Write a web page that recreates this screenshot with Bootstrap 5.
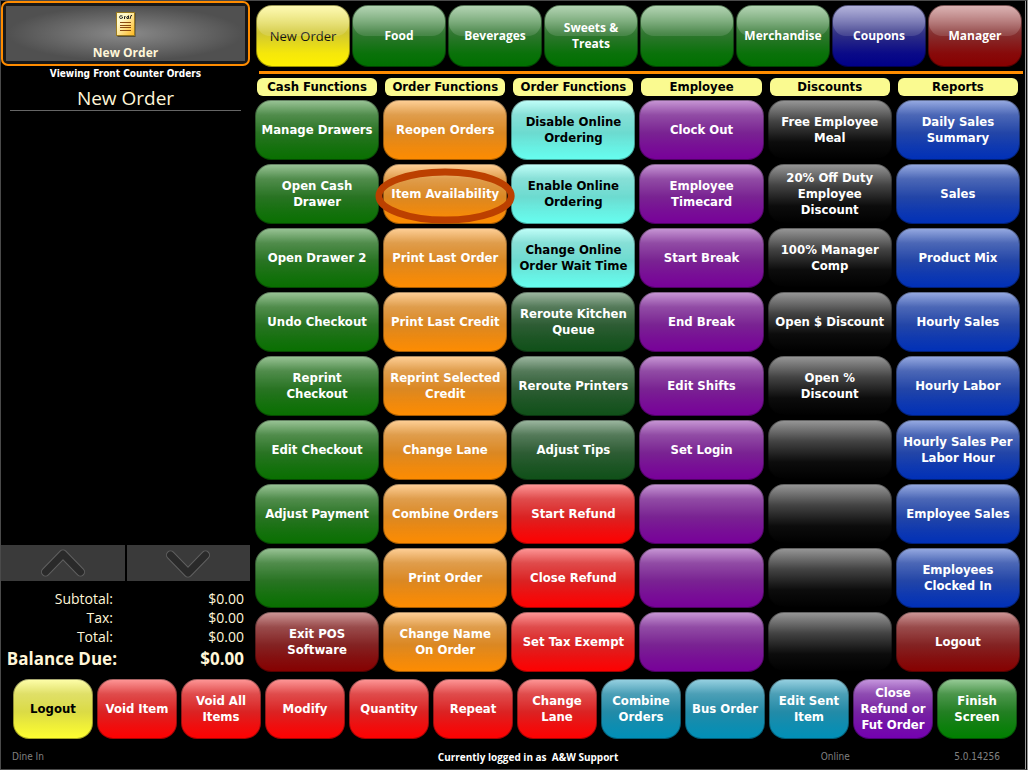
<!DOCTYPE html>
<html lang="en">
<head>
<meta charset="utf-8">
<meta name="viewport" content="width=device-width, initial-scale=1">
<title>Manager Screen</title>
<link href="https://cdn.jsdelivr.net/npm/bootstrap@5.3.0/dist/css/bootstrap.min.css" rel="stylesheet">
<style>
body{background:#000;color:#fff;font-family:"DejaVu Sans Condensed","DejaVu Sans",sans-serif;font-size:13px;line-height:16px}
.shell{min-height:100vh;border:1px solid #4a4a4a;border-right:3px double #999}
.sidebar{flex:0 0 249px;font-family:"Open Sans",sans-serif}
.main-area{padding:4px 2px 0 5px}
.cream{color:#fff6d8}
.order-tab{height:65px;border:2px solid #ff8c00;border-radius:7px;background:#181818;padding:3px}
.order-tab>span{height:100%;background:radial-gradient(ellipse at 50% 50%,#8a8a8a,#505050 70%);font-weight:700;font-size:12px;color:#fff6d8}
.viewing{font-family:"DejaVu Sans Condensed","DejaVu Sans",sans-serif;font-size:10px;font-weight:700}
.order-title{font-size:19px;line-height:24px;border-bottom:1px solid #666;margin:0 9px}
.scroll-key{height:36px;background:#3a3a3a;border:0;padding:0}
.totals{width:100%;font-size:14px;line-height:19px}
.totals th{font-weight:400;text-align:right;width:116px;padding:0 4px 0 0}
.totals td{text-align:right;padding:0 6px 0 0}
.totals .due th,.totals .due td{font-size:17px;line-height:26px;font-weight:700;white-space:nowrap}
.totals .due th{padding-right:0}
.key{--c:#087000;height:60px;border:1px solid rgba(0,0,0,.35);border-radius:16px;color:#fff;font-weight:700;padding:0 2px;
 background:linear-gradient(rgba(255,255,255,.6),rgba(180,180,180,.42) 25%,rgba(125,125,125,.28) 55%,rgba(120,120,120,.12) 78%,transparent) border-box,var(--c) border-box}
.c-orange{--c:#ff8c00}.c-cyan{--c:#66fff0;color:#000}.c-purple{--c:#78009a}
.c-blue{--c:#0030b8}.c-forest{--c:#0f5018}.c-red{--c:#f00}.c-maroon{--c:#860000}.c-lemon{--c:#ffff30;color:#000}
.c-teal{--c:#0090b8}.c-violet{--c:#7400b0}.c-lime{--c:#008000}
.c-black{background:linear-gradient(#999,#444 35%,#0c0c0c 70%,#000) border-box}
.tabs-grid{display:grid;grid-template-columns:repeat(8,1fr);gap:2px;margin:0 1px}
.tab-key{--c:#007000;position:relative;height:62px;border:1px solid rgba(0,0,0,.4);border-radius:16px;padding:0 2px;color:#fff;font:700 12px/16px "Open Sans",sans-serif;
 background:linear-gradient(rgba(255,255,255,.55),rgba(130,130,130,.38) 45%,rgba(130,130,130,.08) 78%,transparent) border-box,var(--c) border-box}
.tab-key::before{content:"";position:absolute;inset:0 0 50% 0;border-radius:15px 15px 13px 13px;background:linear-gradient(rgba(255,255,255,.35),rgba(255,255,255,.12))}
.t-yellow{--c:#fff000;color:#111;font-weight:400;font-size:13px}.t-navy{--c:#000088}.t-maroon{--c:#880000}
.rule{height:3px;background:#ff8c00;margin:4px 0 4px 4px}
.fn-grid{display:grid;grid-template-columns:repeat(6,1fr);gap:4px;margin-right:3px}
.heading{margin:0 2px;height:18px;line-height:18px;border-radius:6px;background:#fafa90;color:#000;font-size:13px;font-weight:700;text-align:center}
.circled{position:relative;z-index:1}
.circled svg{position:absolute;left:-9px;top:3px;width:calc(100% + 18px);height:56px;overflow:visible}
.bottom-grid{display:grid;grid-template-columns:repeat(12,1fr);gap:4px;padding:7px 8px 0 12px}
.status{display:grid;grid-template-columns:1fr auto 1fr;font-size:10px;line-height:14px;padding:11px 25px 5px 11px;color:#808080}
.login-note{margin-left:44px;font-family:"Open Sans",sans-serif}
.link-state{padding-left:98px}
</style>
<script src="https://cdn.jsdelivr.net/npm/bootstrap@5.3.0/dist/js/bootstrap.bundle.min.js"></script>
</head>
<body>
<div class="shell d-flex flex-column">
<div class="d-flex">
<aside class="sidebar d-flex flex-column">
 <button class="order-tab w-100"><span class="d-flex flex-column align-items-center justify-content-end">
  <svg width="20" height="25" viewBox="0 0 20 25" class="mb-2" aria-hidden="true"><defs><linearGradient id="paper" x1="0" y1="0" x2="1" y2="1"><stop offset=".3" stop-color="#fff8c8"/><stop offset="1" stop-color="#ffb81c"/></linearGradient></defs><rect x="1.500" y="1" width="18" height="24" fill="#33290a" opacity=".6"/><rect x=".5" y=".5" width="18" height="23" fill="url(#paper)" stroke="#9a7a20"/><path d="M6.500 4q-3-1-3 1.200t3 .8V5M8.500 7V4.500h1M12.500 4.500q-2 0-2 1.200t2 .8V3.500M14 7l1-3.500h1" fill="none" stroke="#222"/><path d="M4 10.500h11M4 13.500h11M4 15.500h11M4 18.500h11" stroke="#8a4a10"/></svg>
  New Order</span></button>
 <div class="viewing text-center">Viewing Front Counter Orders</div>
 <h1 class="order-title cream fw-normal text-center mt-1 mb-auto">New Order</h1>
 <div class="d-flex" style="gap:2px">
  <button class="scroll-key flex-fill" aria-label="Scroll up"><svg width="48" height="32" viewBox="0 0 48 32" fill="none" stroke-linecap="round" stroke-linejoin="round"><path d="M6.500 25L24 7l17.500 18" stroke="#606060" stroke-width="9"/><path d="M6.500 25L24 7l17.500 18" stroke="#2a2a2a" stroke-width="7"/></svg></button>
  <button class="scroll-key flex-fill" aria-label="Scroll down"><svg width="48" height="32" viewBox="0 0 48 32" fill="none" stroke-linecap="round" stroke-linejoin="round"><path d="M6.500 8L24 26 41.500 8" stroke="#606060" stroke-width="9"/><path d="M6.500 8L24 26 41.500 8" stroke="#2a2a2a" stroke-width="7"/></svg></button>
 </div>
 <table class="totals cream mt-2">
  <tr><th>Subtotal:</th><td>$0.00</td></tr>
  <tr><th>Tax:</th><td>$0.00</td></tr>
  <tr><th>Total:</th><td>$0.00</td></tr>
  <tr class="due"><th>Balance Due:</th><td>$0.00</td></tr>
 </table>
</aside>
<main class="main-area flex-fill">
 <nav class="tabs-grid">
  <button class="tab-key t-yellow">New Order</button><button class="tab-key">Food</button><button class="tab-key">Beverages</button><button class="tab-key">Sweets &amp;<br>Treats</button><button class="tab-key" aria-label="Unassigned"></button><button class="tab-key">Merchandise</button><button class="tab-key t-navy">Coupons</button><button class="tab-key t-maroon">Manager</button>
 </nav>
 <div class="rule"></div>
 <div class="fn-grid">
  <h2 class="heading">Cash Functions</h2><h2 class="heading">Order Functions</h2><h2 class="heading">Order Functions</h2><h2 class="heading">Employee</h2><h2 class="heading">Discounts</h2><h2 class="heading">Reports</h2>

  <button class="key">Manage Drawers</button><button class="key c-orange">Reopen Orders</button><button class="key c-cyan">Disable Online<br>Ordering</button><button class="key c-purple">Clock Out</button><button class="key c-black">Free Employee<br>Meal</button><button class="key c-blue">Daily Sales<br>Summary</button>

  <button class="key">Open Cash<br>Drawer</button><button class="key c-orange circled">Item Availability<svg viewBox="0 0 142 56" preserveAspectRatio="none" aria-hidden="true"><ellipse cx="71" cy="28" rx="67" ry="24" fill="none" stroke="#bc4000" stroke-width="7"/></svg></button><button class="key c-cyan">Enable Online<br>Ordering</button><button class="key c-purple">Employee<br>Timecard</button><button class="key c-black">20% Off Duty<br>Employee<br>Discount</button><button class="key c-blue">Sales</button>

  <button class="key">Open Drawer 2</button><button class="key c-orange">Print Last Order</button><button class="key c-cyan">Change Online<br>Order Wait Time</button><button class="key c-purple">Start Break</button><button class="key c-black">100% Manager<br>Comp</button><button class="key c-blue">Product Mix</button>

  <button class="key">Undo Checkout</button><button class="key c-orange">Print Last Credit</button><button class="key c-forest">Reroute Kitchen<br>Queue</button><button class="key c-purple">End Break</button><button class="key c-black">Open $ Discount</button><button class="key c-blue">Hourly Sales</button>

  <button class="key">Reprint<br>Checkout</button><button class="key c-orange">Reprint Selected<br>Credit</button><button class="key c-forest">Reroute Printers</button><button class="key c-purple">Edit Shifts</button><button class="key c-black">Open %<br>Discount</button><button class="key c-blue">Hourly Labor</button>

  <button class="key">Edit Checkout</button><button class="key c-orange">Change Lane</button><button class="key c-forest">Adjust Tips</button><button class="key c-purple">Set Login</button><button class="key c-black" aria-label="Unassigned"></button><button class="key c-blue">Hourly Sales Per<br>Labor Hour</button>

  <button class="key">Adjust Payment</button><button class="key c-orange">Combine Orders</button><button class="key c-red">Start Refund</button><button class="key c-purple" aria-label="Unassigned"></button><button class="key c-black" aria-label="Unassigned"></button><button class="key c-blue">Employee Sales</button>

  <button class="key" aria-label="Unassigned"></button><button class="key c-orange">Print Order</button><button class="key c-red">Close Refund</button><button class="key c-purple" aria-label="Unassigned"></button><button class="key c-black" aria-label="Unassigned"></button><button class="key c-blue">Employees<br>Clocked In</button>

  <button class="key c-maroon">Exit POS<br>Software</button><button class="key c-orange">Change Name<br>On Order</button><button class="key c-red">Set Tax Exempt</button><button class="key c-purple" aria-label="Unassigned"></button><button class="key c-black" aria-label="Unassigned"></button><button class="key c-maroon">Logout</button>
 </div>
</main>
</div>
<div class="bottom-grid">
 <button class="key c-lemon">Logout</button><button class="key c-red">Void Item</button><button class="key c-red">Void All<br>Items</button><button class="key c-red">Modify</button><button class="key c-red">Quantity</button><button class="key c-red">Repeat</button><button class="key c-red">Change<br>Lane</button><button class="key c-teal">Combine<br>Orders</button><button class="key c-teal">Bus Order</button><button class="key c-teal">Edit Sent<br>Item</button><button class="key c-violet">Close<br>Refund or<br>Fut Order</button><button class="key c-lime">Finish<br>Screen</button>
</div>
<footer class="status">
 <span>Dine In</span>
 <span class="login-note fw-bold text-white">Currently logged in as &nbsp;A&amp;W Support</span>
 <span class="d-flex justify-content-end"><span class="link-state mx-auto">Online</span><span>5.0.14256</span></span>
</footer>
</div>
</body>
</html>
